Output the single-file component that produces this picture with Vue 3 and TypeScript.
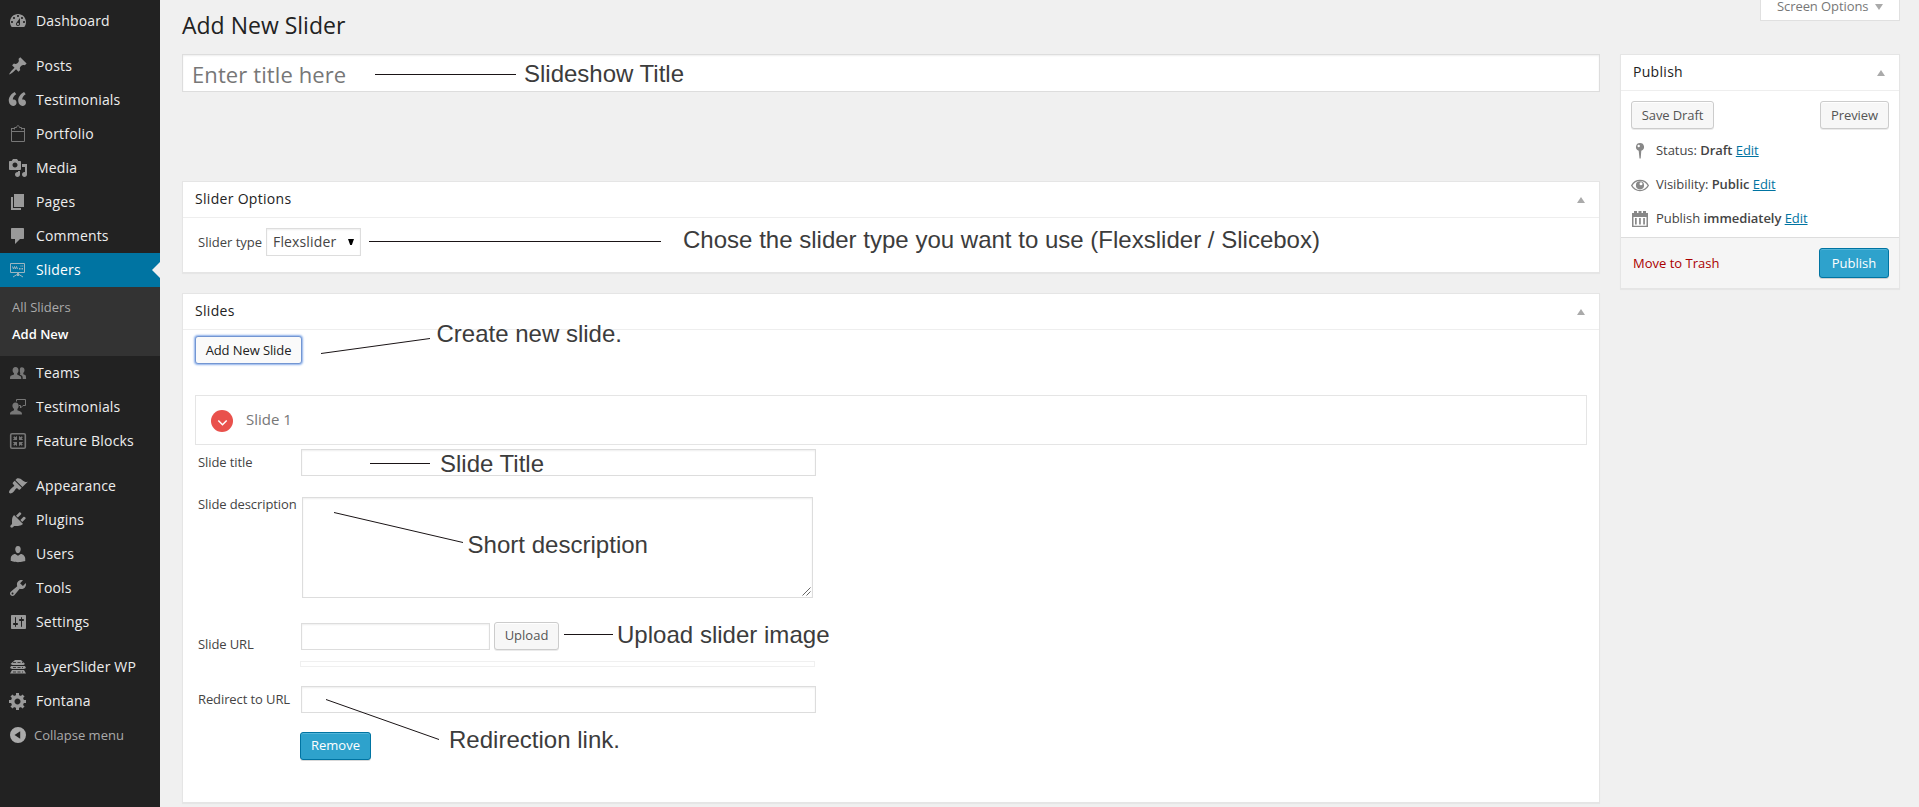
<script setup lang="ts">
import { ref } from 'vue'

interface MenuItem {
  label: string
  path: string
  stroke?: string
  dim?: boolean
  gap?: boolean
  children?: string[]
}

interface Note {
  text: string
  x: number
  y: number
  width: number
  line: [number, number, number, number]
}

const menu: MenuItem[] = [
  {
    label: 'Dashboard',
    path: 'M3.76 16h12.48c1.1-1.37 1.76-3.11 1.76-5 0-4.42-3.58-8-8-8s-8 3.58-8 8c0 1.89.66 3.63 1.76 5zM10 4c.55 0 1 .45 1 1s-.45 1-1 1-1-.45-1-1 .45-1 1-1zM6 6c.55 0 1 .45 1 1s-.45 1-1 1-1-.45-1-1 .45-1 1-1zm8 0c.55 0 1 .45 1 1s-.45 1-1 1-1-.45-1-1 .45-1 1-1zm-5.37 5.55L12 7v6c0 1.1-.9 2-2 2s-2-.9-2-2c0-.57.24-1.08.63-1.45zM4 10c.55 0 1 .45 1 1s-.45 1-1 1-1-.45-1-1 .45-1 1-1zm12 0c.55 0 1 .45 1 1s-.45 1-1 1-1-.45-1-1 .45-1 1-1zm-5 3c0-.55-.45-1-1-1s-1 .45-1 1 .45 1 1 1 1-.45 1-1z',
  },
  {
    label: 'Posts',
    gap: true,
    path: 'M10.44 3.02l1.82-1.82 6.36 6.35-1.83 1.82c-1.05-.68-2.48-.57-3.41.36l-.75.75c-.92.93-1.04 2.35-.35 3.41l-1.83 1.82-2.41-2.41-2.8 2.79c-.42.42-3.38 2.71-3.8 2.29s1.86-3.39 2.28-3.81l2.79-2.79L4.1 9.36l1.83-1.82c1.05.69 2.48.57 3.4-.36l.75-.75c.93-.92 1.05-2.35.36-3.41z',
  },
  {
    label: 'Testimonials',
    path: 'M8.54 12.74c0-.87-.24-1.61-.72-2.22-.73-.92-2.14-1.03-2.96-.85-.34-1.93 1.3-4.39 3.42-5.45L6.65 1.94C3.45 3.46.31 6.96.85 11.37 1.19 14.16 2.8 16 5.08 16c1 0 1.83-.29 2.48-.88.66-.59.98-1.38.98-2.38zm9.43 0c0-.87-.24-1.61-.72-2.22-.73-.92-2.14-1.03-2.96-.85-.34-1.93 1.3-4.39 3.42-5.45l-1.63-2.28c-3.2 1.52-6.34 5.02-5.8 9.43.34 2.79 1.95 4.63 4.23 4.63 1 0 1.83-.29 2.48-.88.66-.59.98-1.38.98-2.38z',
  },
  {
    label: 'Portfolio',
    dim: true,
    path: '',
    stroke: 'M3.5 4.5v13h13v-13M3.5 7.5h13M3 4.5h3M14 4.5h3M6.5 5.5v-2h2c0-2.4 3-2.4 3 0h2v2',
  },
  {
    label: 'Media',
    path: 'M13 11V4c0-.55-.45-1-1-1h-1.67L9 1H5L3.67 3H2c-.55 0-1 .45-1 1v7c0 .55.45 1 1 1h10c.55 0 1-.45 1-1zM7 4.5c1.38 0 2.5 1.12 2.5 2.5S8.38 9.5 7 9.5 4.5 8.38 4.5 7 5.62 4.5 7 4.5zM14 6h5v10.5c0 1.38-1.12 2.5-2.5 2.5S14 17.88 14 16.5s1.12-2.5 2.5-2.5c.17 0 .34.02.5.05V9h-3V6zm-4 8.05V13h2v3.5c0 1.38-1.12 2.5-2.5 2.5S7 17.88 7 16.5 8.12 14 9.5 14c.17 0 .34.02.5.05z',
  },
  { label: 'Pages', path: 'M6 15V2h10v13H6zm-1 1h8v2H3V5h2v11z' },
  {
    label: 'Comments',
    path: 'M4 2h11c.6 0 1 .4 1 1v9c0 .6-.4 1-1 1h-3l-5 5v-5H4c-.6 0-1-.4-1-1V3c0-.6.4-1 1-1z',
  },
  {
    label: 'Sliders',
    path: 'M12.5 5.5h1v1h-1zM14.200 5.500h1v1h-1zM11 8h1.500v1.500H11zM13.500 8h1.500v1.500h-1.500zM9 13h2v3H9z',
    stroke: 'M2.5 3.5h14v9h-14zM5 17l4-2.500h2l4 2.500M4.500 6.500l1 2.500 1-2.500 1 2.500 1-2.500 1 2.500',
    children: ['All Sliders', 'Add New'],
  },
  {
    label: 'Teams',
    dim: true,
    path: 'M7.5 4c2 0 3 1.300 3 3.200 0 1.400-.5 2.500-1.300 3.200v1.200l2.800 1.300c.8.400 1.300.9 1.300 3.100H2c0-2.500.4-3 1.300-3.400L6 11.500v-1.200C5.200 9.600 4.600 8.500 4.600 7.200 4.600 5.300 5.600 4 7.500 4zM13.800 4.200c1.800 0 2.700 1.200 2.700 2.900 0 1.200-.5 2.300-1.200 2.900v1.200l1.800.9c.7.400 1 1 1 3.900h-3.400c0-2.500-.5-3.200-1.500-3.700l-1.200-.6.300-1.700c-.5-.7-.4-1.800-.4-2.800 0-1.300 0-3 1.900-3z',
  },
  {
    label: 'Testimonials',
    dim: true,
    path: 'M7.500 5.500c2 0 3.200 1.400 3.200 3.300 0 1.300-.5 2.400-1.300 3.100v1.300l3 1.300c1.100.5 1.600 1 1.600 3H2c0-2 .4-2.500 1.500-3l2.500-1.300v-1.300C5 11 4.400 10 4.400 8.800c0-1.900 1.200-3.300 3.100-3.300z',
    stroke: 'M8.500 4.500v-2h9v6h-2.500l-2.500 2.500V8.500h-1.500',
  },
  {
    label: 'Feature Blocks',
    dim: true,
    path: 'M9 4.800V9H4.800L6.300 7.500 5.200 6.300l1.100-1.100 1.200 1.100zM11 4.800V9h4.200l-1.500-1.500 1.100-1.200-1.100-1.100-1.200 1.100zM9 15.200V11H4.800l1.500 1.500-1.100 1.200 1.100 1.100 1.200-1.100zM11 15.200V11h4.200l-1.500 1.500 1.100 1.200-1.100 1.100-1.200-1.100z',
    stroke: 'M4 2.700h12c.9 0 1.300.4 1.300 1.300v12c0 .9-.4 1.300-1.300 1.300H4c-.9 0-1.300-.4-1.300-1.300V4c0-.9.4-1.300 1.300-1.300z',
  },
  {
    label: 'Appearance',
    gap: true,
    path: 'M14.48 11.06L7.41 3.99l1.5-1.5c.5-.56 2.3-.47 3.51.32 1.21.8 1.43 1.28 2.91 2.1 1.18.64 2.45 1.26 4.45.85zm-.71.71L6.7 4.7 4.93 6.47c-.39.39-.39 1.02 0 1.41l1.06 1.06c.39.39.39 1.03 0 1.42-.6.6-1.43 1.11-2.21 1.69-.35.26-.7.53-1.01.84C1.43 14.23.4 16.08 1.4 17.07c.99 1 2.84-.03 4.18-1.36.31-.31.58-.66.85-1.02.57-.78 1.08-1.61 1.69-2.21.39-.39 1.02-.39 1.41 0l1.06 1.06c.39.39 1.02.39 1.41 0z',
  },
  {
    label: 'Plugins',
    path: 'M13.11 4.36L9.87 7.6 8 5.73l3.24-3.24c.35-.34 1.05-.2 1.56.32.52.51.66 1.21.31 1.55zm-8 1.77l.91-1.12 9.01 9.01-1.19.84c-.71.71-2.63 1.16-3.82 1.16H6.14L4.9 17.26c-.59.59-1.54.59-2.12 0-.59-.58-.59-1.53 0-2.12l1.24-1.24v-3.88c0-1.13.4-3.19 1.09-3.89zm7.26 3.97l3.24-3.24c.34-.35 1.04-.21 1.55.31.52.51.66 1.21.31 1.55l-3.24 3.25z',
  },
  {
    label: 'Users',
    path: 'M10 9.25c-2.27 0-2.73-3.44-2.73-3.44C7 4.02 7.82 2 9.97 2c2.16 0 2.98 2.02 2.71 3.81 0 0-.41 3.44-2.68 3.44zm0 2.57L12.72 10c2.39 0 4.52 2.33 4.52 4.53v2.49s-3.65 1.13-7.24 1.13c-3.65 0-7.24-1.13-7.24-1.13v-2.49c0-2.25 1.94-4.48 4.47-4.48z',
  },
  {
    label: 'Tools',
    path: 'M16.68 9.77c-1.34 1.34-3.3 1.67-4.95.99l-5.41 6.52c-.99.99-2.59.99-3.58 0s-.99-2.59 0-3.57l6.52-5.42c-.68-1.65-.35-3.61.99-4.95 1.28-1.28 3.12-1.62 4.72-1.06l-2.89 2.89 2.82 2.82 2.86-2.87c.53 1.58.18 3.39-1.08 4.65zM3.81 16.21c.4.39 1.04.39 1.43 0 .4-.4.4-1.04 0-1.43-.39-.4-1.03-.4-1.43 0-.39.39-.39 1.03 0 1.43z',
  },
  {
    label: 'Settings',
    path: 'M18 16V4c0-.55-.45-1-1-1H4c-.55 0-1 .45-1 1v12c0 .55.45 1 1 1h13c.55 0 1-.45 1-1zM8 11h1c.55 0 1 .45 1 1s-.45 1-1 1H8v1.5c0 .28-.22.5-.5.5s-.5-.22-.5-.5V13H6c-.55 0-1-.45-1-1s.45-1 1-1h1V5.5c0-.28.22-.5.5-.5s.5.22.5.5V11zm5-2h-1c-.55 0-1-.45-1-1s.45-1 1-1h1V5.500c0-.28.22-.5.5-.5s.5.22.5.5V7h1c.55 0 1 .45 1 1s-.45 1-1 1h-1v5.500c0 .28-.22.5-.5.5s-.5-.22-.5-.5V9z',
  },
  {
    label: 'LayerSlider WP',
    gap: true,
    path: 'M7 3h6l4 4-1.500 1h-11L2.500 7zM3 9h14l1 2-2 1H4l-2-1zM4 13h12l2 3.500H2z',
  },
  {
    label: 'Fontana',
    path: 'M18 12h-2.18c-.17.7-.44 1.35-.81 1.93l1.54 1.54-2.1 2.1-1.54-1.54c-.58.36-1.23.63-1.91.79V19H8v-2.18c-.68-.16-1.33-.43-1.91-.79l-1.54 1.54-2.12-2.12 1.54-1.54c-.36-.58-.63-1.23-.79-1.91H1V9.03h2.17c.16-.7.44-1.35.8-1.94L2.43 5.55l2.1-2.1 1.54 1.54c.58-.37 1.24-.64 1.93-.81V2h3v2.18c.68.16 1.33.43 1.91.79l1.54-1.54 2.12 2.12-1.54 1.54c.36.59.64 1.24.8 1.94H18V12zm-8.500 1.500c1.660 0 3-1.340 3-3s-1.340-3-3-3-3 1.340-3 3 1.340 3 3 3z',
  },
]

const notes: Note[] = [
  { text: 'Slideshow Title', x: 524, y: 82, width: 160, line: [375, 74.5, 516, 74.5] },
  { text: 'Chose the slider type you want to use (Flexslider / Slicebox)', x: 683, y: 248, width: 637, line: [369, 241.5, 661, 241.5] },
  { text: 'Create new slide.', x: 436.5, y: 342, width: 185.5, line: [321, 353.5, 430, 338.5] },
  { text: 'Slide Title', x: 440, y: 472, width: 104, line: [370, 463.5, 430, 463.5] },
  { text: 'Short description', x: 467.5, y: 552.5, width: 180.5, line: [334, 512.5, 463, 542.5] },
  { text: 'Upload slider image', x: 617, y: 642.5, width: 212.5, line: [564, 634.5, 613, 634.5] },
  { text: 'Redirection link.', x: 449, y: 747.5, width: 171, line: [326, 699.5, 439, 739.5] },
]

const postTitle = ref('')
const slideTitle = ref('')
const slideText = ref('')
const slideUrl = ref('')
const redirectUrl = ref('')
</script>

<template>
  <div class="admin">
    <nav class="sidebar">
      <template v-for="(item, i) in menu" :key="i">
        <a class="item" :class="{ current: item.children, gap: item.gap, dim: item.dim }">
          <svg class="icon" viewBox="0 0 20 20">
            <path :d="item.path" fill-rule="evenodd" />
            <path v-if="item.stroke" class="outline" :class="{ thick: item.label === 'Feature Blocks' }" :d="item.stroke" />
            <path v-if="item.label === 'LayerSlider WP'" class="cuts" d="M5 5.500h10M5 10.500h10M5 15h10" />
          </svg>
          <span>{{ item.label }}</span>
        </a>
        <div v-if="item.children" class="submenu">
          <a v-for="(c, n) in item.children" :key="c" :class="{ on: n === 1 }">{{ c }}</a>
        </div>
      </template>
      <a class="item collapse">
        <svg class="icon" viewBox="0 0 20 20">
          <path fill-rule="evenodd" d="M10 2a8 8 0 1 0 0 16a8 8 0 0 0 0-16zM12.200 6.200v7.600L6.500 10z" />
        </svg>
        <span>Collapse menu</span>
      </a>
    </nav>

    <main class="content">
      <div class="column">
        <h2>Add New Slider</h2>
        <input v-model="postTitle" class="field title" placeholder="Enter title here" />

        <section class="panel options">
          <header><h3>Slider Options</h3><i class="up"></i></header>
          <div class="type-row">
            <label>Slider type</label>
            <div class="select">
              <span>Flexslider</span>
              <svg width="6" height="6" viewBox="0 0 6 6"><path d="M0 0h6L3.800 6H2.200z" /></svg>
            </div>
          </div>
        </section>

        <section class="panel slides">
          <header><h3>Slides</h3><i class="up"></i></header>
          <div class="body">
            <button class="btn focus">Add New Slide</button>
            <div class="slide-head">
              <svg width="22" height="22" viewBox="0 0 22 22">
                <circle cx="11" cy="11" r="11" fill="#e9514c" />
                <path d="M7.300 10.500l4.200 4.200 4.200-4.200" fill="none" stroke="#fff" stroke-width="1.500" />
              </svg>
              <span>Slide 1</span>
            </div>
            <div class="row r-title">
              <label>Slide title</label>
              <input v-model="slideTitle" class="field" />
            </div>
            <div class="row r-desc">
              <label>Slide description</label>
              <div class="area">
                <textarea v-model="slideText" class="field"></textarea>
                <svg class="grip" width="9" height="9" viewBox="0 0 9 9"><path d="M0.500 8.500l8-8M4.500 8.500l4-4" /></svg>
              </div>
            </div>
            <div class="row r-url">
              <label>Slide URL</label>
              <input v-model="slideUrl" class="field" />
              <button class="btn">Upload</button>
            </div>
            <div class="strip"></div>
            <div class="row r-redirect">
              <label>Redirect to URL</label>
              <input v-model="redirectUrl" class="field" />
            </div>
            <button class="btn primary remove">Remove</button>
          </div>
        </section>
      </div>

      <aside>
        <div class="screen-options">Screen Options<i class="down"></i></div>
        <section class="panel publish">
          <header><h3>Publish</h3><i class="up"></i></header>
          <div class="actions">
            <button class="btn save">Save Draft</button>
            <button class="btn preview">Preview</button>
          </div>
          <p>
            <svg width="18" height="18" viewBox="0 0 18 18"><path fill-rule="evenodd" d="M9 1a4 4 0 0 1 1.300 7.800L9.700 16.500H8.500L7.700 8.800A4 4 0 0 1 9 1zM7.700 2.800a1.200 1.200 0 1 0 0 2.400a1.200 1.200 0 0 0 0-2.400z" /></svg>
            <span>Status: <b>Draft</b> <a>Edit</a></span>
          </p>
          <p>
            <svg width="18" height="18" viewBox="0 0 18 18">
              <path d="M.7 9.500C4.500 2.700 13.500 2.700 17.300 9.500C13.500 16.300 4.500 16.300.7 9.500z" fill="none" stroke="#888" stroke-width="1.400" />
              <path fill-rule="evenodd" d="M9 5.200a4.100 4.100 0 1 0 0 8.200a4.100 4.100 0 0 0 0-8.200zM10 6.300a1.500 1.500 0 1 1 0 3a1.500 1.500 0 0 1 0-3z" />
            </svg>
            <span>Visibility: <b>Public</b> <a>Edit</a></span>
          </p>
          <p>
            <svg width="18" height="18" viewBox="0 0 18 18"><path fill-rule="evenodd" d="M1 3h2V1h3v2h1.500V1h3v2H12V1h3v2h2v14H1zM2.500 7v8.700h13V7zM4 8h1.700v6.500H4zM8.100 8h1.700v6.500H8.100zM12.200 8h1.700v6.500h-1.700z" /></svg>
            <span>Publish <b>immediately</b> <a>Edit</a></span>
          </p>
          <footer>
            <a class="trash">Move to Trash</a>
            <button class="btn primary big">Publish</button>
          </footer>
        </section>
      </aside>
    </main>

    <svg class="notes" width="1919" height="807" viewBox="0 0 1919 807">
      <g v-for="n in notes" :key="n.text">
        <line :x1="n.line[0]" :y1="n.line[1]" :x2="n.line[2]" :y2="n.line[3]" />
        <text :x="n.x" :y="n.y" :textLength="n.width" lengthAdjust="spacingAndGlyphs">{{ n.text }}</text>
      </g>
    </svg>
  </div>
</template>

<style>
body {
  background: #f0f0f0;
  overflow: hidden;
}
</style>

<style scoped>
* {
  box-sizing: border-box;
}
.admin {
  position: relative;
  display: flex;
  width: 1919px;
  height: 807px;
  overflow: hidden;
  background: #f0f0f0;
  color: #444;
  font: 13px/18px 'Open Sans', sans-serif;
}
.sidebar {
  width: 160px;
  flex: none;
  padding-top: 4px;
  background: #222;
}
.item {
  display: flex;
  align-items: center;
  height: 34px;
  padding-left: 8px;
  gap: 8px;
  color: #eee;
  font-size: 14px;
  letter-spacing: 0.18px;
  white-space: nowrap;
}
.item span {
  margin-top: -1px;
}
.item.gap {
  margin-top: 11px;
}
.icon {
  width: 20px;
  height: 20px;
  flex: none;
  fill: #999;
}
.outline {
  fill: none;
  stroke: #999;
  stroke-width: 1;
}
.outline.thick {
  stroke-width: 1.6;
}
.dim .icon {
  fill: #777;
}
.dim .outline {
  stroke: #777;
}
.cuts {
  fill: none;
  stroke: #222;
  stroke-width: 0.8;
  stroke-dasharray: 3 1.5;
}
.current {
  position: relative;
  background: #0074a2;
  color: #fff;
}
.current .icon {
  fill: #9cb5c0;
}
.current .outline {
  stroke: #9cb5c0;
}
.current::after {
  content: '';
  position: absolute;
  right: 0;
  top: 9px;
  border: 8px solid transparent;
  border-left-width: 0;
  border-right-color: #f0f0f0;
}
.submenu {
  height: 69px;
  padding: 7px 12px;
  background: #333;
}
.submenu a {
  display: block;
  height: 27px;
  line-height: 26px;
  color: #aaa;
}
.submenu .on {
  color: #fff;
  font-weight: 600;
}
.collapse {
  gap: 6px;
  font-size: 13px;
  letter-spacing: 0;
  color: #aaa;
}
.collapse .icon {
  fill: #aaa;
}
.content {
  display: flex;
  flex: 1;
  gap: 20px;
  padding: 0 19px 0 22px;
}
.column {
  width: 1418px;
  flex: none;
}
h2 {
  margin: 0;
  height: 54px;
  padding-top: 10px;
  font-size: 23px;
  font-weight: 400;
  line-height: 31px;
  color: #222;
}
.field {
  display: block;
  border: 1px solid #ddd;
  border-radius: 0;
  outline: 0;
  background: #fff;
  box-shadow: inset 0 1px 2px rgba(0, 0, 0, 0.07);
  font-family: 'Open Sans', sans-serif;
}
.title {
  width: 100%;
  height: 38px;
  padding: 4px 9px 3px;
  font-size: 22px;
  letter-spacing: 0.1px;
}
.title::placeholder {
  color: #777;
  opacity: 1;
}
.panel {
  border: 1px solid #e5e5e5;
  background: #fff;
  box-shadow: 0 1px 1px rgba(0, 0, 0, 0.04);
}
.panel header {
  display: flex;
  align-items: center;
  justify-content: space-between;
  height: 36px;
  padding: 0 14px 0 12px;
  border-bottom: 1px solid #eee;
}
h3 {
  margin: -1px 0 0;
  font-size: 14px;
  font-weight: 500;
  letter-spacing: 0.3px;
  color: #222;
}
.up,
.down {
  border: 4px solid transparent;
}
.up {
  border-top: 0;
  border-bottom: 6px solid #aaa;
}
.down {
  border-bottom: 0;
  border-top: 6px solid #aaa;
}
.options {
  margin-top: 89px;
  height: 92px;
}
.type-row {
  display: flex;
  align-items: center;
  height: 28px;
  margin: 10px 0 0 15px;
}
.type-row label {
  width: 68px;
}
.select {
  display: flex;
  align-items: center;
  justify-content: space-between;
  width: 95px;
  height: 28px;
  padding: 0 6px;
  border: 1px solid #ddd;
  box-shadow: inset 0 1px 2px rgba(0, 0, 0, 0.07);
  font-size: 14px;
  letter-spacing: 0.15px;
}
.select svg {
  margin-top: -1px;
  fill: #000;
}
.slides {
  margin-top: 20px;
  height: 510px;
}
.body {
  padding: 6px 12px 0;
}
.btn {
  display: block;
  height: 28px;
  padding: 0 10px 1px;
  border: 1px solid #ccc;
  border-radius: 3px;
  background: #f7f7f7;
  box-shadow: inset 0 1px 0 #fff, 0 1px 0 rgba(0, 0, 0, 0.08);
  color: #555;
  font: 13px/25px 'Open Sans', sans-serif;
  white-space: nowrap;
}
.focus {
  width: 107px;
  padding: 0;
  border-color: #7396d2;
  background: #fafafa;
  box-shadow: 0 0 2px 1px #8cb0ea;
  color: #222;
  letter-spacing: -0.1px;
}
.primary {
  border-color: #0074a2;
  background: #2ea2cc;
  box-shadow: inset 0 1px 0 rgba(120, 200, 230, 0.5), 0 1px 0 rgba(0, 0, 0, 0.15);
  color: #fff;
}
.big {
  width: 70px;
  height: 30px;
  padding: 0;
  line-height: 28px;
}
.slide-head {
  display: flex;
  align-items: center;
  gap: 13px;
  height: 50px;
  margin-top: 31px;
  padding: 2px 15px 0;
  border: 1px solid #e5e5e5;
  font-size: 15px;
  color: #777;
}
.slide-head span {
  margin-top: -4px;
}
.row {
  display: flex;
  padding-left: 3px;
}
.row label {
  width: 103px;
  flex: none;
  letter-spacing: -0.1px;
}
.r-title {
  margin-top: 4px;
  height: 27px;
}
.r-title label {
  padding-top: 4px;
}
.r-title .field,
.r-redirect .field {
  width: 515px;
  height: 27px;
}
.r-desc {
  margin-top: 21px;
  height: 101px;
}
.r-desc label {
  width: 104px;
  margin-top: -2px;
}
.area {
  position: relative;
  width: 511px;
  height: 101px;
}
.area textarea {
  width: 511px;
  height: 101px;
  resize: none;
}
.grip {
  position: absolute;
  right: 2px;
  bottom: 2px;
  fill: none;
  stroke: #666;
}
.r-url {
  margin-top: 24px;
  height: 28px;
}
.r-url label {
  padding-top: 13px;
}
.r-url .field {
  width: 189px;
  height: 27px;
  margin-top: 1px;
}
.r-url .btn {
  width: 65px;
  margin-left: 4px;
  padding: 0 0 1px;
}
.strip {
  width: 515px;
  height: 6px;
  margin: 11px 0 0 105px;
  border: 1px solid #f0f0f0;
}
.r-redirect {
  margin-top: 19px;
  height: 27px;
}
.r-redirect label {
  padding-top: 4px;
}
.remove {
  width: 71px;
  margin: 19px 0 0 105px;
  padding: 0 0 1px;
}
aside {
  width: 280px;
  flex: none;
}
.screen-options {
  display: flex;
  align-items: center;
  justify-content: space-between;
  width: 140px;
  height: 21px;
  margin-left: 140px;
  padding: 0 16px 7px;
  border: 1px solid #e0e0e0;
  border-top: 0;
  background: #fff;
  color: #777;
  line-height: 13px;
  letter-spacing: -0.08px;
}
.publish {
  margin-top: 33px;
  height: 235px;
}
.actions {
  display: flex;
  justify-content: space-between;
  padding: 10px;
  height: 42px;
}
.save,
.preview {
  padding: 0;
  letter-spacing: -0.1px;
}
.save {
  width: 83px;
}
.preview {
  width: 69px;
}
p {
  display: flex;
  align-items: center;
  gap: 7px;
  height: 34px;
  margin: 0;
  padding-left: 10px;
  letter-spacing: -0.05px;
}
p svg {
  margin-top: 1px;
  fill: #888;
}
b {
  font-weight: 600;
}
p a {
  color: #0074a2;
  text-decoration: underline;
}
footer {
  display: flex;
  align-items: center;
  justify-content: space-between;
  height: 51px;
  margin-top: 2px;
  padding: 0 10px 1px 12px;
  border-top: 1px solid #ddd;
  background: #f5f5f5;
}
.trash {
  color: #a00;
}
.notes {
  position: absolute;
  left: 0;
  top: 0;
  pointer-events: none;
}
.notes line {
  stroke: #1a1416;
  stroke-width: 1;
}
.notes text {
  fill: #3c3c3c;
  font: 24px 'Liberation Sans', Arial, sans-serif;
}
</style>
